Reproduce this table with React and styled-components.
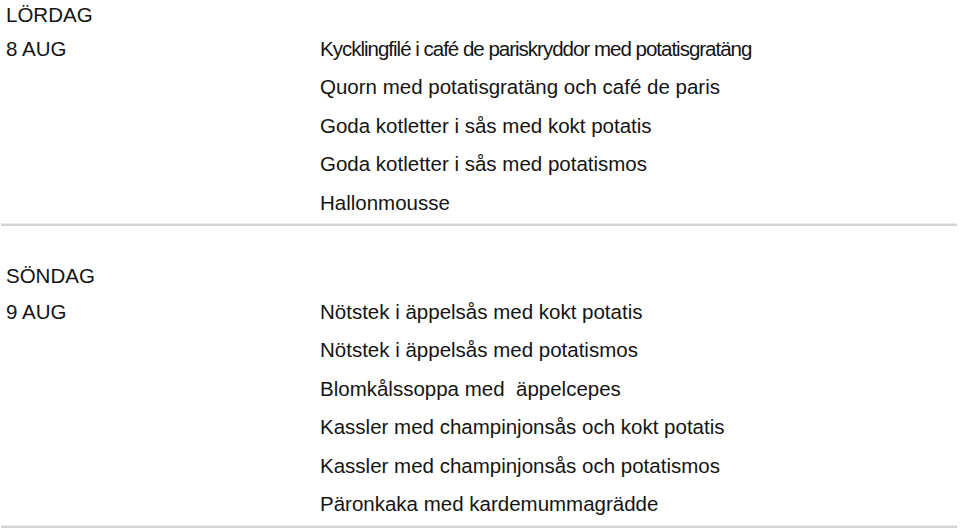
import React from "react";
import styled, { createGlobalStyle } from "styled-components";

const Global = createGlobalStyle`
  html, body { margin: 0; padding: 0; background: #fff; }
  body { font-family: "Liberation Sans", Arial, sans-serif; color: #141414; overflow: hidden; }
`;

const Page = styled.div`
  width: 956px;
  margin-left: 1px;
`;

const Day = styled.section`
  padding-top: ${(p) => (p.$first ? 1 : 36)}px;
  padding-bottom: 2px;
  border-bottom: 2px solid #d4d4d4;
  box-shadow: 0 -1px 0 #ececec inset;
`;

const DayName = styled.div`
  font-size: 20.5px;
  line-height: 27px;
  padding-left: 5px;
`;

const Row = styled.div`
  display: grid;
  grid-template-columns: 314px 1fr;
  padding-top: ${(p) => (p.$first ? 1.5 : 3.5)}px;
  padding-left: 5px;
`;

const DateCell = styled.div`
  font-size: 20.5px;
  line-height: 38.5px;
`;

const Items = styled.ul`
  list-style: none;
  margin: 0;
  padding: 0;
`;

const Item = styled.li`
  font-size: 20.5px;
  line-height: 38.5px;
  white-space: pre;
  letter-spacing: ${(p) => p.$spacing || 0}px;
`;

const days = [
  {
    name: "LÖRDAG",
    date: "8 AUG",
    items: [
      { text: "Kycklingfilé i café de pariskryddor med potatisgratäng", spacing: -1 },
      { text: "Quorn med potatisgratäng och café de paris" },
      { text: "Goda kotletter i sås med kokt potatis" },
      { text: "Goda kotletter i sås med potatismos" },
      { text: "Hallonmousse" },
    ],
  },
  {
    name: "SÖNDAG",
    date: "9 AUG",
    items: [
      { text: "Nötstek i äppelsås med kokt potatis" },
      { text: "Nötstek i äppelsås med potatismos" },
      { text: "Blomkålssoppa med  äppelcepes" },
      { text: "Kassler med champinjonsås och kokt potatis" },
      { text: "Kassler med champinjonsås och potatismos" },
      { text: "Päronkaka med kardemummagrädde" },
    ],
  },
];

export default function App() {
  return (
    <>
      <Global />
      <Page>
        {days.map((d, i) => (
          <Day key={d.name} $first={i === 0}>
            <DayName>{d.name}</DayName>
            <Row $first={i === 0}>
              <DateCell>{d.date}</DateCell>
              <Items>
                {d.items.map((it) => (
                  <Item key={it.text} $spacing={it.spacing}>
                    {it.text}
                  </Item>
                ))}
              </Items>
            </Row>
          </Day>
        ))}
      </Page>
    </>
  );
}
